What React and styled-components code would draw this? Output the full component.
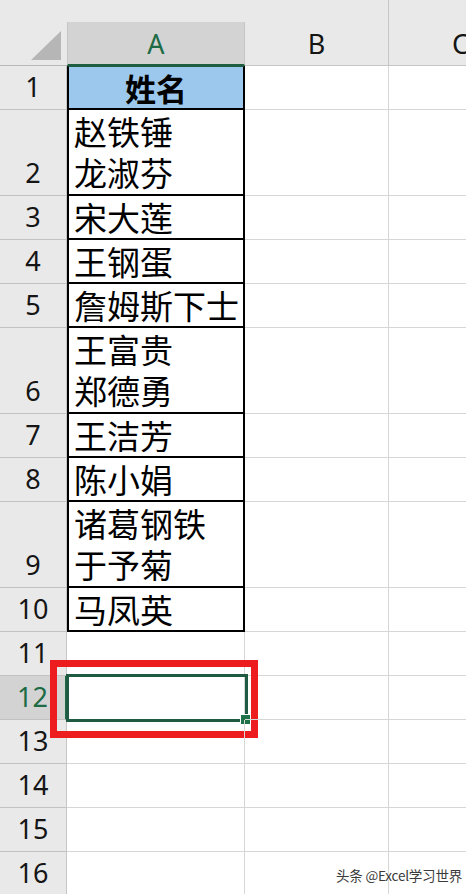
import React from "react"
import styled, { createGlobalStyle } from "styled-components"

const GlobalStyle = createGlobalStyle`
  html, body {
    margin: 0;
    padding: 0;
    background: #ffffff;
    overflow: hidden;
  }
  * {
    box-sizing: border-box;
  }
`

const rows = [
  { n: 1, h: 44, head: true, lines: ["姓名"] },
  { n: 2, h: 86, lines: ["赵铁锤", "龙淑芬"] },
  { n: 3, h: 44, lines: ["宋大莲"] },
  { n: 4, h: 44, lines: ["王钢蛋"] },
  { n: 5, h: 44, lines: ["詹姆斯下士"] },
  { n: 6, h: 86, lines: ["王富贵", "郑德勇"] },
  { n: 7, h: 44, lines: ["王洁芳"] },
  { n: 8, h: 44, lines: ["陈小娟"] },
  { n: 9, h: 86, lines: ["诸葛钢铁", "于予菊"] },
  { n: 10, h: 44, lines: ["马凤英"] },
  { n: 11, h: 44 },
  { n: 12, h: 44, selected: true },
  { n: 13, h: 44 },
  { n: 14, h: 44 },
  { n: 15, h: 44 },
  { n: 16, h: 44 },
]

const COLS = "67px 178px 144px 144px"

const Sheet = styled.div`
  position: relative;
  width: 466px;
  height: 894px;
  overflow: hidden;
  background: #ffffff;
  font-family: "Noto Sans", "Open Sans", sans-serif;
`

const TopStrip = styled.div`
  height: 22px;
  background: #e9e9e9;
  display: grid;
  grid-template-columns: ${COLS};
`

const StripPart = styled.div`
  border-right: ${(p) => (p.line ? "1px solid #c6c6c6" : "none")};
`

const HeaderRow = styled.div`
  display: grid;
  grid-template-columns: ${COLS};
  height: 44px;
  background: #e9e9e9;
`

const Corner = styled.div`
  display: flex;
  align-items: flex-end;
  justify-content: flex-end;
  padding: 0 6px 5px 0;
  border-bottom: 1px solid #b8b8b8;
`

const ColHead = styled.div`
  display: flex;
  align-items: center;
  justify-content: center;
  font-size: 27px;
  color: ${(p) => (p.active ? "#1d6b45" : "#151515")};
  background: ${(p) => (p.active ? "#d3d3d3" : "#e9e9e9")};
  border-right: 1px solid #c6c6c6;
  border-bottom: ${(p) => (p.active ? "2px solid #1d5e40" : "1px solid #c6c6c6")};
  border-left: ${(p) => (p.active ? "1px solid #c6c6c6" : "none")};
`

const Row = styled.div`
  display: grid;
  grid-template-columns: ${COLS};
  height: ${(p) => p.h}px;
`

const RowHead = styled.div`
  display: flex;
  align-items: flex-end;
  justify-content: center;
  padding-bottom: 2px;
  font-size: 27px;
  line-height: 40px;
  color: ${(p) => (p.active ? "#1d6b45" : "#151515")};
  background: ${(p) => (p.active ? "#d3d3d3" : "#e9e9e9")};
  border-bottom: 1px solid #c2c2c2;
  border-right: ${(p) => (p.active ? "2px solid #1d6b45" : "1px solid #c6c6c6")};
`

const Cell = styled.div`
  position: relative;
  border-right: 1px solid #d6d6d6;
  border-bottom: 1px solid #d6d6d6;
`

const DataCell = styled.div`
  display: flex;
  flex-direction: column;
  justify-content: center;
  align-items: ${(p) => (p.head ? "center" : "flex-start")};
  padding-left: ${(p) => (p.head ? "0" : "5px")};
  background: ${(p) => (p.head ? "#9cc8ee" : "#ffffff")};
  border-left: 2px solid #000000;
  border-right: 2px solid #000000;
  border-bottom: 2px solid #000000;
  border-top: ${(p) => (p.head ? "1px solid #1d5e40" : "none")};
  font-family: "Noto Sans CJK SC", "Noto Sans", sans-serif;
  font-size: ${(p) => (p.head ? "31px" : "33px")};
  font-weight: ${(p) => (p.head ? 700 : 400)};
  line-height: 41px;
  color: #000000;
  white-space: nowrap;
`

const Selection = styled.div`
  position: absolute;
  left: -1px;
  top: -2px;
  width: 182px;
  height: 48px;
  border: 3px solid #1f5b43;
`

const FillHandle = styled.div`
  position: absolute;
  right: -6px;
  bottom: -6px;
  width: 11px;
  height: 11px;
  background: #1f7148;
  border: 1px solid #ffffff;
`

const RedFrame = styled.div`
  position: absolute;
  left: -17px;
  top: -16px;
  width: 208px;
  height: 78px;
  border: 7px solid #ec1c1f;
`

const Watermark = styled.div`
  position: absolute;
  right: 4px;
  bottom: 9px;
  font-family: "Noto Sans CJK SC", "Noto Sans", sans-serif;
  font-size: 13.5px;
  color: #3a3a3a;
  text-shadow: 0 0 2px #ffffff, 0 0 2px #ffffff;
  letter-spacing: -0.2px;
`

function CornerTriangle() {
  return (
    <svg width="30" height="29" viewBox="0 0 30 29">
      <polygon points="30,0 30,29 0,29" fill="#b6b6b6" />
    </svg>
  )
}

export default function App() {
  return (
    <Sheet>
      <GlobalStyle />
      <TopStrip>
        <StripPart />
        <StripPart />
        <StripPart line />
        <StripPart />
      </TopStrip>
      <HeaderRow>
        <Corner>
          <CornerTriangle />
        </Corner>
        <ColHead active>A</ColHead>
        <ColHead>B</ColHead>
        <ColHead>C</ColHead>
      </HeaderRow>
      {rows.map((r) => (
        <Row key={r.n} h={r.h}>
          <RowHead active={r.selected}>{r.n}</RowHead>
          {r.lines ? (
            <DataCell head={r.head}>
              {r.lines.map((t) => (
                <span key={t}>{t}</span>
              ))}
            </DataCell>
          ) : (
            <Cell>
              {r.selected && (
                <>
                  <Selection>
                    <FillHandle />
                  </Selection>
                  <RedFrame />
                </>
              )}
            </Cell>
          )}
          <Cell />
          <Cell />
        </Row>
      ))}
      <Watermark>头条 @Excel学习世界</Watermark>
    </Sheet>
  )
}
